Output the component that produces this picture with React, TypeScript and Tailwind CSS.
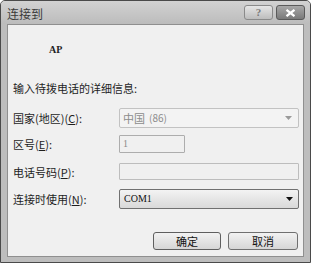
import React from "react";

const cjk = { fontFamily: '"Noto Sans CJK SC", "Noto Sans", sans-serif' };
const serif = { fontFamily: '"Liberation Serif", "Noto Sans CJK SC", serif' };

function Label({ children }: { children: React.ReactNode }) {
  return <div className="w-[106px] shrink-0 text-[11px] leading-[14px] text-[#1e1e1e] whitespace-nowrap">{children}</div>;
}

export default function App() {
  return (
    <div className="w-[311px] h-[263px] bg-[#bdbdbd] border border-[#4a4a4a] rounded-t-[5px] flex flex-col overflow-hidden" style={cjk}>
      <div className="h-[23px] shrink-0 flex items-center pl-[6px] pr-[5px] bg-gradient-to-b from-[#d2d2d2] to-[#bcbcbc]">
        <div className="text-[12px] leading-[14px] text-[#3a3a3a] pt-[2px]">连接到</div>
        <div className="ml-auto flex gap-[3px] items-start h-full pt-[4px]">
          <div className="w-[29px] h-[15px] rounded-[3px] border border-[#8a8a8a] bg-gradient-to-b from-[#e6e6e6] to-[#bdbdbd] flex items-center justify-center text-[11px] leading-none font-bold text-[#7a7a7a]" style={serif}>?</div>
          <div className="w-[29px] h-[15px] rounded-[3px] border border-[#5a5a5a] bg-gradient-to-b from-[#a8a8a8] to-[#7a7a7a] flex items-center justify-center">
            <svg width="11" height="8" viewBox="0 0 11 8">
              <path d="M1.5 0.8 L9.5 7.2 M9.5 0.8 L1.5 7.2" stroke="#ffffff" strokeWidth="2.2" />
            </svg>
          </div>
        </div>
      </div>
      <div className="flex-1 mx-[6px] mb-[5px] bg-[#f0f0f0] border border-[#8f8f8f] flex flex-col pl-[5px] pr-[4px]">
        <div className="mt-[19px] ml-[36px] text-[10px] leading-[12px] font-bold text-[#222]" style={serif}>AP</div>
        <div className="mt-[25px] text-[11px] leading-[14px] text-[#1e1e1e]">输入待拨电话的详细信息:</div>

        <div className="mt-[13px] flex items-center h-[20px]">
          <Label>国家(地区)(<span className="underline">C</span>):</Label>
          <div className="flex-1 h-[20px] border border-[#c2c2c2] rounded-[2px] bg-[#f3f3f3] flex items-center pl-[3px] pr-[6px]">
            <span className="text-[11px] leading-none text-[#8c8c8c]">中国</span>
            <span className="ml-[4px] text-[10px] leading-none text-[#8c8c8c]">(86)</span>
            <svg className="ml-auto" width="7" height="4" viewBox="0 0 7 4"><path d="M0 0 L7 0 L3.5 4 Z" fill="#9a9a9a" /></svg>
          </div>
        </div>

        <div className="mt-[7px] flex items-center h-[18px]">
          <Label>区号(<span className="underline">E</span>):</Label>
          <div className="w-[66px] h-[18px] border border-[#adadad] rounded-[1px] bg-[#f0f0f0] flex items-center pl-[3px]">
            <span className="text-[10px] leading-none text-[#8a8a8a]" style={serif}>1</span>
          </div>
        </div>

        <div className="mt-[10px] flex items-center h-[17px]">
          <Label>电话号码(<span className="underline">P</span>):</Label>
          <div className="flex-1 h-[17px] border border-[#bdbdbd] rounded-[1px] bg-[#f0f0f0]" />
        </div>

        <div className="mt-[9px] flex items-center h-[20px]">
          <Label>连接时使用(<span className="underline">N</span>):</Label>
          <div className="flex-1 h-[20px] border border-[#707070] rounded-[2px] bg-gradient-to-b from-[#f3f3f3] to-[#d9d9d9] flex items-center pl-[4px] pr-[5px]">
            <span className="text-[10px] leading-none text-[#111]" style={serif}>COM1</span>
            <svg className="ml-auto" width="7" height="4" viewBox="0 0 7 4"><path d="M0 0 L7 0 L3.5 4 Z" fill="#111" /></svg>
          </div>
        </div>

        <div className="mt-[23px] flex justify-end gap-[7px] pr-[1px]">
          <div className="w-[68px] h-[18px] rounded-[3px] border border-[#5f5f5f] bg-gradient-to-b from-[#f2f2f2] to-[#d6d6d6] flex items-center justify-center text-[11px] leading-none text-[#111]">确定</div>
          <div className="w-[70px] h-[18px] rounded-[3px] border border-[#707070] bg-gradient-to-b from-[#f2f2f2] to-[#d6d6d6] flex items-center justify-center text-[11px] leading-none text-[#111]">取消</div>
        </div>
      </div>
    </div>
  );
}
